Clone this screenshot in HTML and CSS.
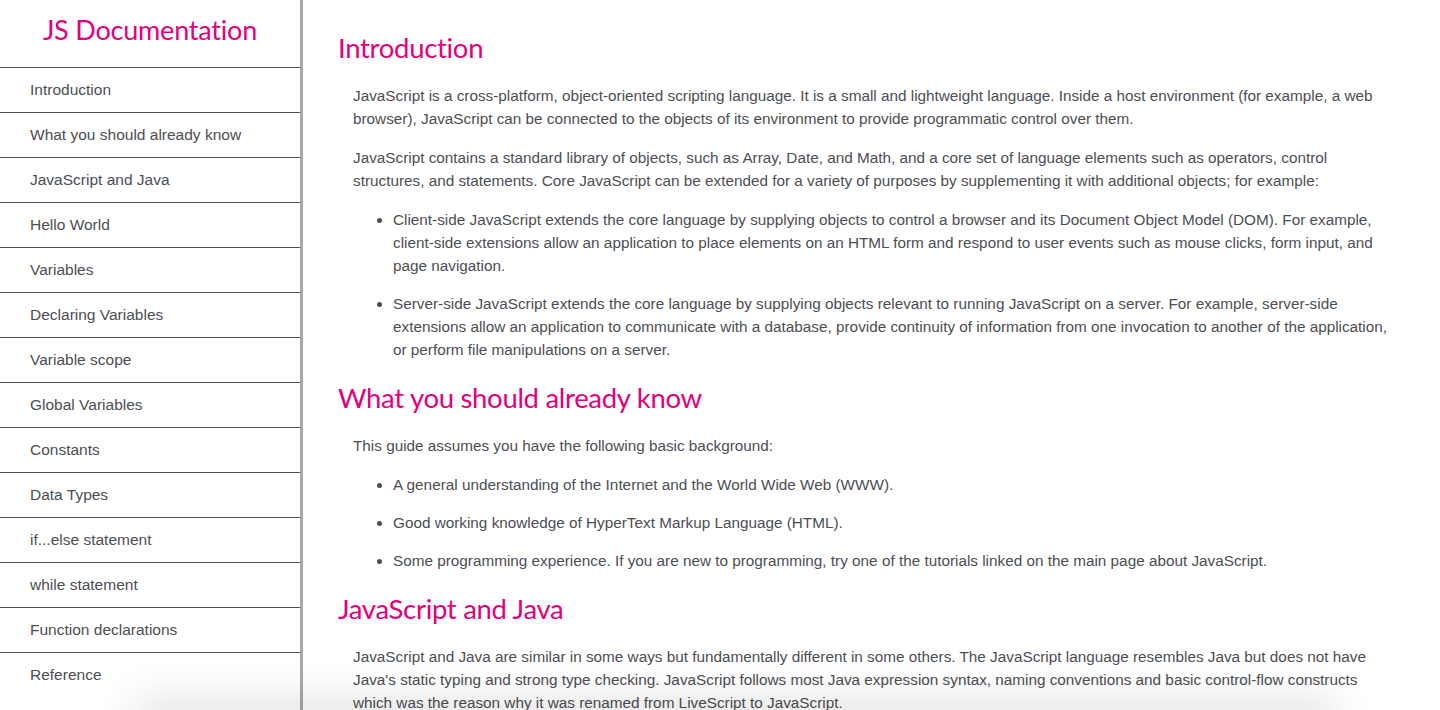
FILE: index.html
```html
<!DOCTYPE html>
<html lang="en">
<head>
<meta charset="utf-8">
<title>JS Documentation</title>
<link rel="stylesheet" href="styles.css">
</head>
<body>
<div class="page">
  <nav class="navbar" id="navbar">
    <header class="nav-title">JS Documentation</header>
    <ul class="nav-list">
      <li><a class="nav-link" href="#Introduction">Introduction</a></li>
      <li><a class="nav-link" href="#What_you_should_already_know">What you should already know</a></li>
      <li><a class="nav-link" href="#JavaScript_and_Java">JavaScript and Java</a></li>
      <li><a class="nav-link" href="#Hello_World">Hello World</a></li>
      <li><a class="nav-link" href="#Variables">Variables</a></li>
      <li><a class="nav-link" href="#Declaring_Variables">Declaring Variables</a></li>
      <li><a class="nav-link" href="#Variable_scope">Variable scope</a></li>
      <li><a class="nav-link" href="#Global_Variables">Global Variables</a></li>
      <li><a class="nav-link" href="#Constants">Constants</a></li>
      <li><a class="nav-link" href="#Data_Types">Data Types</a></li>
      <li><a class="nav-link" href="#if...else_statement">if...else statement</a></li>
      <li><a class="nav-link" href="#while_statement">while statement</a></li>
      <li><a class="nav-link" href="#Function_declarations">Function declarations</a></li>
      <li><a class="nav-link" href="#Reference">Reference</a></li>
    </ul>
  </nav>
  <main class="main-doc" id="main-doc">
    <section class="main-section" id="Introduction">
      <header class="section-title">Introduction</header>
      <p>JavaScript is a cross-platform, object-oriented scripting language. It is a small and lightweight language. Inside a host environment (for example, a web browser), JavaScript can be connected to the objects of its environment to provide programmatic control over them.</p>
      <p>JavaScript contains a standard library of objects, such as Array, Date, and Math, and a core set of language elements such as operators, control structures, and statements. Core JavaScript can be extended for a variety of purposes by supplementing it with additional objects; for example:</p>
      <ul>
        <li>Client-side JavaScript extends the core language by supplying objects to control a browser and its Document Object Model (DOM). For example, client-side extensions allow an application to place elements on an HTML form and respond to user events such as mouse clicks, form input, and page navigation.</li>
        <li>Server-side JavaScript extends the core language by supplying objects relevant to running JavaScript on a server. For example, server-side extensions allow an application to communicate with a database, provide continuity of information from one invocation to another of the application, or perform file manipulations on a server.</li>
      </ul>
    </section>
    <section class="main-section" id="What_you_should_already_know">
      <header class="section-title">What you should already know</header>
      <p>This guide assumes you have the following basic background:</p>
      <ul>
        <li>A general understanding of the Internet and the World Wide Web (WWW).</li>
        <li>Good working knowledge of HyperText Markup Language (HTML).</li>
        <li>Some programming experience. If you are new to programming, try one of the tutorials linked on the main page about JavaScript.</li>
      </ul>
    </section>
    <section class="main-section" id="JavaScript_and_Java">
      <header class="section-title">JavaScript and Java</header>
      <p>JavaScript and Java are similar in some ways but fundamentally different in some others. The JavaScript language resembles Java but does not have Java's static typing and strong type checking. JavaScript follows most Java expression syntax, naming conventions and basic control-flow constructs which was the reason why it was renamed from LiveScript to JavaScript.</p>
    </section>
  </main>
</div>
<div class="window-shadow"></div>
</body>
</html>
```
FILE: styles.css
```css
* {
  box-sizing: border-box;
}

html, body {
  margin: 0;
  padding: 0;
  background: #ffffff;
}

body {
  font-family: "Liberation Sans", Arial, sans-serif;
  color: #4d4e53;
  height: 710px;
  overflow: hidden;
}

.page {
  display: flex;
  height: 710px;
}

.navbar {
  flex: 0 0 303px;
  width: 303px;
  height: 710px;
  border-right: 3px solid #a2aaad;
  display: flex;
  flex-direction: column;
}

.nav-title {
  height: 67px;
  display: flex;
  align-items: center;
  justify-content: center;
  font-family: Lato, "Open Sans", sans-serif;
  font-size: 27px;
  color: #e4007c;
  padding-bottom: 9px;
  letter-spacing: -0.2px;
}

.nav-list {
  list-style: none;
  margin: 0;
  padding: 0;
}

.nav-list li {
  border-top: 1px solid #4d4e53;
}

.nav-link {
  display: flex;
  align-items: center;
  height: 44px;
  padding-left: 30px;
  padding-bottom: 0;
  font-size: 15.5px;
  color: #4d4e53;
  text-decoration: none;
}

.main-doc {
  flex: 1;
  padding: 24px 35px 0 35px;
  overflow: hidden;
}

.section-title {
  font-family: Lato, "Open Sans", sans-serif;
  font-size: 27.5px;
  line-height: 48px;
  color: #e4007c;
  margin: 0 0 12px 0;
  letter-spacing: -0.3px;
}

.main-section + .main-section .section-title {
  margin-top: 13px;
}

.main-section p {
  font-size: 15.3px;
  line-height: 23px;
  margin: 0 15px 16px 15px;
}

.main-section ul {
  margin: 0 15px 0 15px;
  padding-left: 40px;
}

.main-section li {
  font-size: 15.3px;
  line-height: 23px;
  margin-bottom: 15px;
}

.main-section ul li:last-child {
  margin-bottom: 0;
}

.window-shadow {
  position: fixed;
  left: 140px;
  right: 110px;
  top: 712px;
  height: 30px;
  border-radius: 40px;
  box-shadow: 0 -6px 40px 10px rgba(0, 0, 0, 0.10);
  pointer-events: none;
}
```
